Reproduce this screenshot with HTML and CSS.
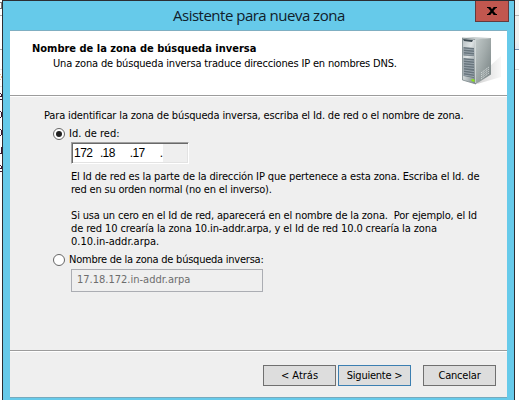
FILE: index.html
```
<!DOCTYPE html>
<html lang="es">
<head>
<meta charset="utf-8">
<title>Asistente para nueva zona</title>
<link rel="stylesheet" href="styles.css">
</head>
<body>
<div class="screen">
  <div class="behind-left">
    <svg width="2" height="400" viewBox="0 0 2 400">
      <path d="M0 15.5H2M0 49.5H2" stroke="#aaa"/>
      <path d="M0 69.5H2M0 86.5H2" stroke="#e2e2e2"/>
      <path d="M0 2h2v1H0zM1 3h1v5H1zM0 8h2v1H0z" fill="#777"/>
      <path d="M0 74h1v1H0zM1 76h1v2H1zM0 79h1v1H0z" fill="#e7b98b"/>
      <path d="M0 93h1v1H0zM1 94h1v3H1zM0 96h2v1H0zM0 99h2v1H0zM0 111h1v1H0zM1 112h1v5H1zM0 117h1v1H0zM0 129h1v1H0zM1 130h1v5H1zM0 135h1v1H0zM1 147h1v7H1zM0 153h2v1H0zM0 165h1v1H0zM1 166h1v3H1zM0 168h2v1H0zM0 171h2v1H0z" fill="#3c1830"/>
    </svg>
  </div>
  <div class="dialog">
    <div class="titlebar">
      <h1 class="title">Asistente para nueva zona</h1>
      <button class="close" aria-label="Cerrar">
        <svg width="10" height="8" viewBox="0 0 10 8"><path d="M0 0H3.3L5 2.2 6.7 0H10V1H9L6.4 4 9 7h1V8H6.7L5 5.8 3.3 8H0V7H1L3.6 4 1 1H0z" fill="#000"/></svg>
      </button>
    </div>
    <div class="client">
      <div class="header">
        <div>
          <h2 class="heading">Nombre de la zona de búsqueda inversa</h2>
          <p class="subtitle">Una zona de búsqueda inversa traduce direcciones IP en nombres DNS.</p>
        </div>
        <svg class="server" width="42" height="50" viewBox="0 0 42 50">
          <defs>
            <linearGradient id="side" x1="0" y1="0" x2="1" y2="1"><stop offset="0" stop-color="#c2caca"/><stop offset=".45" stop-color="#a2abab"/><stop offset="1" stop-color="#747f80"/></linearGradient>
            <linearGradient id="front" x1="0" y1="0" x2="1" y2="1"><stop offset="0" stop-color="#b4bcc0"/><stop offset=".4" stop-color="#dfe4e5"/><stop offset="1" stop-color="#6f7c80"/></linearGradient>
            <linearGradient id="shade" x1="0" y1="0" x2="1" y2="0"><stop offset="0" stop-color="#d4d4d4"/><stop offset="1" stop-color="#f8f8f8"/></linearGradient>
          </defs>
          <path d="M29 30 40 20V41L16 48z" fill="url(#shade)"/>
          <path d="M1 2 12 1 30 2 14 4z" fill="#c9cfd0"/>
          <path d="M14 3.5 30 2V38.5L15 48z" fill="url(#side)"/>
          <path d="M1 2 14 3.5 15 48 1 44z" fill="url(#front)"/>
          <path d="M2 3 12 4 11 6 3 5z" fill="#3d4a51"/>
          <path d="M2.5 11 13 12V20L2.5 19.5zM2.5 22 13 23V42L2.5 40z" fill="#68757d"/>
          <path d="M2.5 13 13 14M2.5 15.5 13 16.5M2.5 18 13 19M2.5 24 13 25M2.5 26.5 13 27.5M2.5 29 13 30M2.5 31.5 13 32.5M2.5 34 13 35.5M2.5 36.5 13 38M2.5 39 13 40.5" stroke="#aab4bb" stroke-width=".8"/>
          <path d="M1.5 2V44L15 48M1 2 14 3.5" fill="none" stroke="#7e898c" stroke-width=".8"/>
          <path d="M14.5 4V47" stroke="#d6dcdc" stroke-width=".8"/>
          <path d="M20 39 28 33M20 41 28 35M20 43 28 37M20 37 28 31" stroke="#e0e4e4" stroke-width=".8" stroke-dasharray="1.5 .6"/>
          <path d="M10.5 43 13.5 43.5V46L10.5 45z" fill="#8be613"/>
        </svg>
      </div>
      <div class="content">
        <p class="intro">Para identificar la zona de búsqueda inversa, escriba el Id. de red o el nombre de zona.</p>
        <label class="option option-id"><span class="radio checked"></span><span>Id. de red:</span></label>
        <div class="ip-field"><div class="octets"><span class="octet first">172</span><span class="octet second">.18</span><span class="octet third">.17</span><span>.</span></div></div>
        <p class="help">
          <span class="line a1">El Id de red es la parte de la dirección IP que pertenece a esta zona. Escriba el Id. de</span>
          <span class="line a2">red en su orden normal (no en el inverso).</span>
        </p>
        <p class="help">
          <span class="line b1">Si usa un cero en el Id de red, aparecerá en el nombre de la zona.&nbsp; Por ejemplo, el Id</span>
          <span class="line b2">de red 10 crearía la zona 10.in-addr.arpa, y el Id de red 10.0 crearía la zona</span>
          <span class="line">0.10.in-addr.arpa.</span>
        </p>
        <label class="option option-name"><span class="radio"></span><span class="name-label">Nombre de la zona de búsqueda inversa:</span></label>
        <div class="name-field">17.18.172.in-addr.arpa</div>
      </div>
      <div class="footer">
        <button class="btn">&lt; Atrás</button>
        <button class="btn default">Siguiente &gt;</button>
        <button class="btn cancel">Cancelar</button>
      </div>
    </div>
  </div>
  <div class="behind-right"></div>
</div>
</body>
</html>
```
FILE: styles.css
```
* { box-sizing: border-box; }
body, h1, h2, p { margin: 0; }
body {
  width: 519px;
  height: 400px;
  overflow: hidden;
  background: #fff;
  color: #000;
  font: 11px/13px "DejaVu Sans Condensed", "DejaVu Sans", sans-serif;
  font-stretch: condensed;
}
.screen { display: flex; height: 400px; }
.behind-left { width: 2px; flex: none; }
.behind-left svg { display: block; }
.behind-right {
  flex: 1;
  background: linear-gradient(#f3f3f3 0 15px, #b5b5b5 15px 16px, #f0f0f0 16px 40px, #e4eaf5 49px, #7893b5 49px 50px, #fff 50px 69px, #d9d9d9 69px 70px, #fff 70px);
}
.dialog {
  width: 513px;
  flex: none;
  padding: 0 7px;
  background: #66caea;
  border: 1px solid #2c2e33;
  border-bottom: 0;
}
.titlebar {
  display: flex;
  justify-content: flex-end;
  height: 29px;
}
.title {
  width: 178px;
  margin-right: 124px;
  padding-top: 4px;
  font: 15px/20px "Open Sans", sans-serif;
  letter-spacing: -0.5px;
  white-space: nowrap;
  color: #10202a;
}
.close {
  display: flex;
  align-items: center;
  justify-content: center;
  width: 34px;
  height: 21px;
  margin-right: -2px;
  padding: 0;
  background: #c1574f;
  border: 1px solid #643a3d;
  border-top: 0;
}
.client {
  display: flex;
  flex-direction: column;
  width: 497px;
  height: 368px;
  background: #efefef;
  border-top: 1px solid #7fafc2;
  border-bottom: 1px solid #76aabd;
}
.header {
  display: flex;
  justify-content: space-between;
  height: 66px;
  padding: 11px 4px 0 22px;
  background: #fff;
  border-bottom: 1px solid #fff;
  box-shadow: inset 0 -1px #9c9c9c;
}
.heading { font: bold 11px/13px "DejaVu Sans Condensed", "DejaVu Sans", sans-serif; white-space: nowrap; }
.subtitle { margin-top: 2px; padding-left: 21px; letter-spacing: -0.17px; white-space: nowrap; }
.server { margin-top: -6px; flex: none; }
.content { height: 254px; padding: 12px 0 0 34px; }
.intro { letter-spacing: -0.147px; white-space: nowrap; }
.option { display: flex; align-items: center; height: 13px; padding-left: 9px; gap: 4px; white-space: nowrap; }
.option-id { margin-top: 5px; }
.option-name { margin-top: 5px; }
.name-label { letter-spacing: -0.24px; }
.radio {
  display: flex;
  align-items: center;
  justify-content: center;
  width: 12px;
  height: 12px;
  flex: none;
  background: #fff;
  border: 1px solid #666;
  border-radius: 50%;
}
.checked::after { content: ""; width: 6px; height: 6px; border-radius: 50%; background: #222; }
.ip-field {
  width: 118px;
  height: 22px;
  margin: 2px 0 0 27px;
  background: #efefef;
  border: 1px solid;
  border-color: #a0a0a0 #fff #fff #a0a0a0;
  box-shadow: inset 1px 1px #696969, inset -1px -1px #e3e3e3;
  padding: 1px;
}
.octets { display: flex; width: 90px; height: 18px; padding: 2px 0 0 1px; background: #fff; font: 12px/14px "Liberation Sans", sans-serif; }
.octet.first { width: 26px; letter-spacing: -0.5px; }
.octet.second { width: 30px; letter-spacing: -0.6px; }
.octet.third { width: 30px; letter-spacing: -0.6px; }
.help { margin: 6px 0 0 27px; }
.help + .help { margin-top: 13px; }
.line { display: block; white-space: nowrap; }
.a1 { letter-spacing: -0.137px; }
.a2 { letter-spacing: -0.2px; }
.b1 { letter-spacing: -0.155px; }
.b2 { letter-spacing: -0.117px; }
.name-field {
  width: 192px;
  height: 23px;
  margin: 3px 0 0 27px;
  padding: 3px 0 0 5px;
  border: 1px solid #abadb3;
  color: #6d6d6d;
}
.footer {
  display: flex;
  justify-content: flex-end;
  flex: 1;
  gap: 2px;
  padding: 13px 11px 0 0;
  border-top: 1px solid #fff;
  box-shadow: 0 -1px #9c9c9c;
}
.btn {
  width: 73px;
  height: 21px;
  padding: 0;
  background: #ddd;
  border: 1px solid #707070;
  font: inherit;
  color: #000;
}
.default { border-color: #3c7fb1; letter-spacing: -0.25px; }
.cancel { margin-left: 10px; letter-spacing: -0.2px; }
```
